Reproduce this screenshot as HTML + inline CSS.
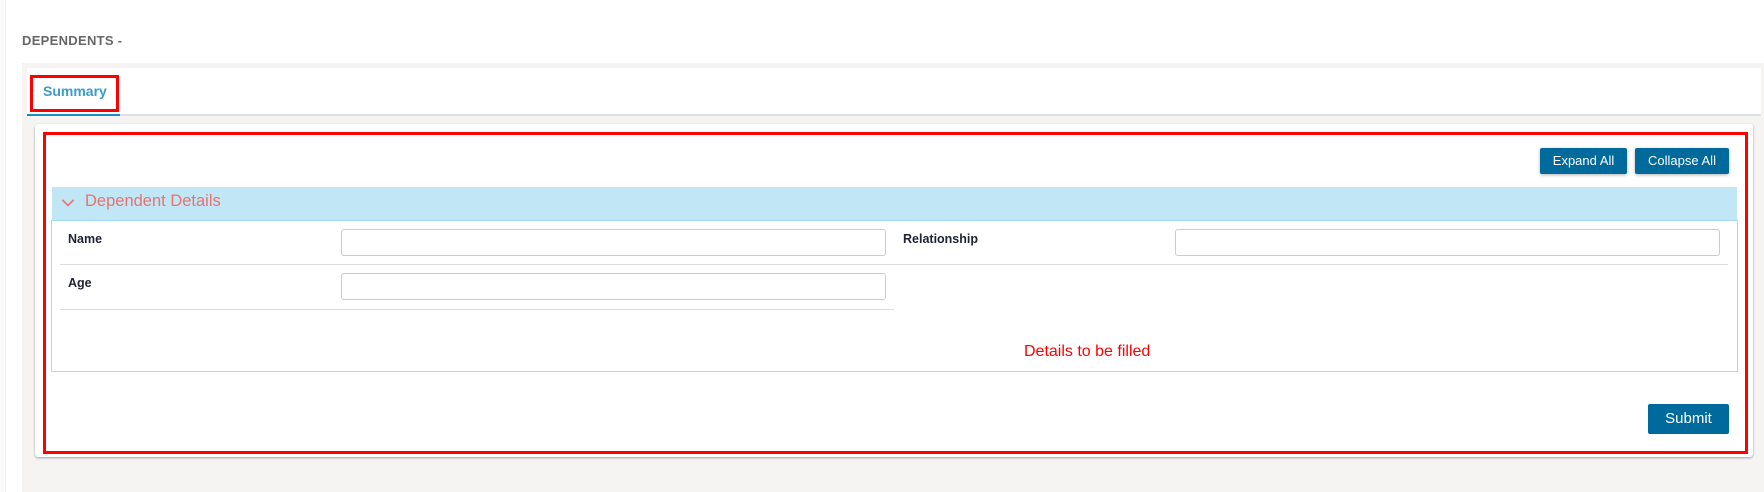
<!DOCTYPE html>
<html><head><meta charset="utf-8"><style>
*{box-sizing:border-box;margin:0;padding:0}
body{width:1764px;height:492px;background:#fff;position:relative;overflow:hidden;font-family:"Liberation Sans",sans-serif}
.a{position:absolute}
.btn{position:absolute;background:#016a9c;color:#fff;font-size:13px;text-align:center;border-radius:2px;box-shadow:0 1px 3px rgba(0,0,0,.3)}
.lbl{position:absolute;font-size:12.5px;font-weight:bold;color:#1e2233}
.inp{position:absolute;border:1px solid #ccc;border-radius:3px;background:#fff}
.line{position:absolute;height:1px;background:#ddd}
</style></head><body>
<div class="a" style="left:0;top:0;width:6px;height:492px;background:#fafafa;border-right:1px solid #eee"></div>
<div class="a" style="left:22px;top:33px;font-size:13px;font-weight:bold;color:#666;letter-spacing:.3px">DEPENDENTS -</div>
<div class="a" style="left:22px;top:63px;width:1742px;height:429px;background:#f5f4f2"></div>
<div class="a" style="left:27px;top:68px;width:1734px;height:48px;background:#fff;border-bottom:2px solid #dde0e4"></div>
<div class="a" style="left:27px;top:114px;width:93px;height:2px;background:#1a8ec4"></div>
<div class="a" style="left:30px;top:75px;width:89px;height:37px;border:3px solid #f00"></div>
<div class="a" style="left:43px;top:83px;font-size:14px;font-weight:bold;color:#3d9bc8">Summary</div>
<div class="a" style="left:35px;top:124px;width:1718px;height:333px;background:#fff;border-radius:3px;box-shadow:0 1px 2px rgba(0,0,0,.35)"></div>
<div class="a" style="left:43px;top:132px;width:1705px;height:322px;border:3px solid #f00"></div>
<div class="btn" style="left:1540px;top:148px;width:87px;height:26px;line-height:26px">Expand All</div>
<div class="btn" style="left:1635px;top:148px;width:94px;height:26px;line-height:26px">Collapse All</div>
<div class="a" style="left:52px;top:187px;width:1685px;height:33px;background:#c1e6f6"></div>
<svg class="a" style="left:61px;top:198px" width="14" height="10"><path d="M1.5 2 L7 7.5 L12.5 2" stroke="#e8736f" stroke-width="1.6" fill="none"/></svg>
<div class="a" style="left:85px;top:192px;font-size:16.5px;color:#e8736f">Dependent Details</div>
<div class="a" style="left:51px;top:220px;width:1687px;height:152px;border:1px solid #a8dcf4"></div>
<div class="lbl" style="left:68px;top:232px">Name</div>
<div class="inp" style="left:341px;top:229px;width:545px;height:27px"></div>
<div class="lbl" style="left:903px;top:232px">Relationship</div>
<div class="inp" style="left:1175px;top:229px;width:545px;height:27px"></div>
<div class="line" style="left:60px;top:264px;width:1668px"></div>
<div class="lbl" style="left:68px;top:276px">Age</div>
<div class="inp" style="left:341px;top:273px;width:545px;height:27px"></div>
<div class="line" style="left:60px;top:309px;width:834px"></div>
<div class="a" style="left:1024px;top:343px;font-size:16px;color:#f00">Details to be filled</div>
<div class="btn" style="left:1648px;top:404px;width:81px;height:30px;line-height:30px;font-size:15px;box-shadow:none">Submit</div>
</body></html>
